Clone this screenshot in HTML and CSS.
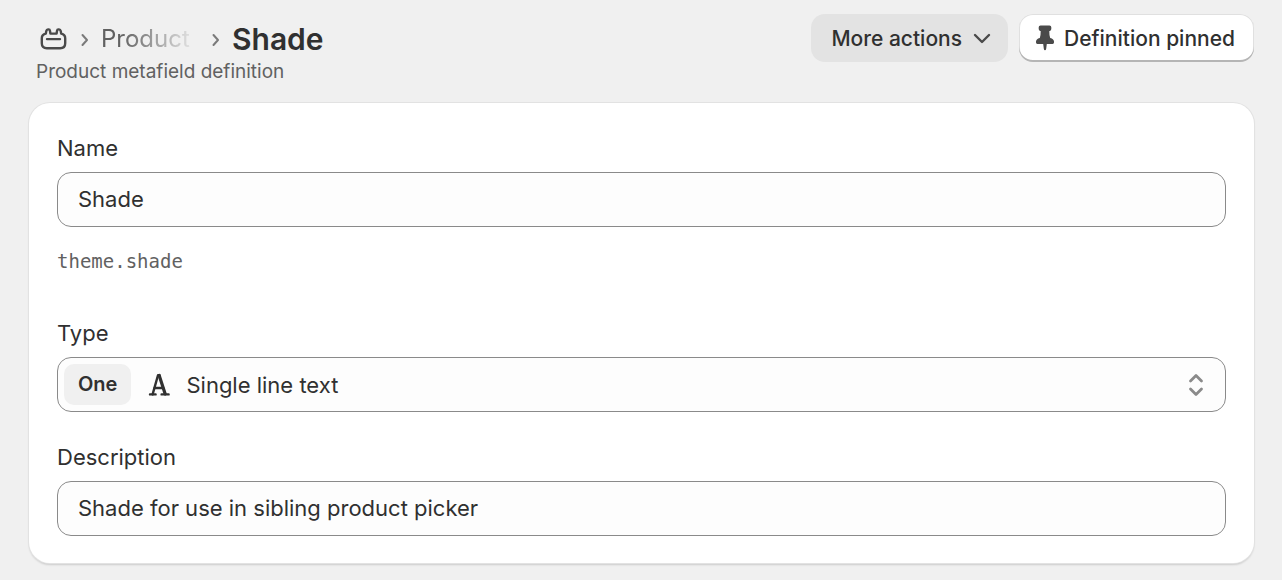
FILE: index.html
```html
<!DOCTYPE html>
<html lang="en">
<head>
  <meta charset="UTF-8">
  <meta name="viewport" content="width=device-width, initial-scale=1.0">
  <title>Shade</title>
  <link rel="stylesheet" href="styles.css">
</head>
<body>
  <main class="page">
    <header class="page-header">
      <div class="heading">
        <div class="title-row">
          <a class="home-link" href="#" aria-label="Custom data">
            <svg width="28" height="24" viewBox="0 0 28 24" fill="none" stroke="#4a4a4a" stroke-width="2.4" stroke-linecap="round" stroke-linejoin="round">
              <path d="M5.8 6.6 L6.3 4 Q6.6 2.4 8 2.4 H8.6 Q9.8 2.4 10 3.8 L10.4 6.6 H16.6 L17 3.8 Q17.2 2.4 18.4 2.4 H19 Q20.4 2.4 20.7 4 L21.2 6.6 Q25.2 7.4 25.2 11.2 V16.2 Q25.2 21.2 20.2 21.2 H6.8 Q1.8 21.2 1.8 16.2 V11.2 Q1.8 7.4 5.8 6.6 Z"/>
              <path d="M7 12.1 H20"/>
            </svg>
          </a>
          <svg class="chevron" width="8" height="14" viewBox="0 0 8 14" fill="none" stroke="#7a7a7a" stroke-width="2" stroke-linecap="round" stroke-linejoin="round">
            <path d="M1.5 2 L6 7 L1.5 12"/>
          </svg>
          <a class="parent-link" href="#">Product m</a>
          <svg class="chevron" width="8" height="14" viewBox="0 0 8 14" fill="none" stroke="#7a7a7a" stroke-width="2" stroke-linecap="round" stroke-linejoin="round">
            <path d="M1.5 2 L6 7 L1.5 12"/>
          </svg>
          <h1>Shade</h1>
        </div>
        <p class="subtitle">Product metafield definition</p>
      </div>
      <div class="actions">
        <button class="btn btn-plain" type="button">
          More actions
          <svg width="18" height="12" viewBox="0 0 18 12" fill="none" stroke="#4a4a4a" stroke-width="2.4" stroke-linecap="round" stroke-linejoin="round">
            <path d="M2 3 L9 10 L16 3"/>
          </svg>
        </button>
        <button class="btn btn-raised" type="button">
          <svg width="20" height="26" viewBox="0 0 20 26" fill="#4a4a4a">
            <path d="M5.5 0.5 H14.5 Q16.3 0.5 16.3 2.3 V4 Q16.3 5.6 14.8 6 L14.3 6.1 Q14.2 10.6 15.2 12.9 Q19 13.9 19 16.5 V17.6 Q19 19 17.6 19 H11.8 L11.2 23.8 Q10.9 25.3 10 25.3 Q9.1 25.3 8.8 23.8 L8.2 19 H2.4 Q1 19 1 17.6 V16.5 Q1 13.9 4.8 12.9 Q5.8 10.6 5.7 6.1 L5.2 6 Q3.7 5.6 3.7 4 V2.3 Q3.7 0.5 5.5 0.5 Z"/>
          </svg>
          Definition pinned
        </button>
      </div>
    </header>

    <form class="card">
      <div class="field">
        <label for="name">Name</label>
        <input class="control" id="name" type="text" value="Shade">
        <p class="handle">theme.shade</p>
      </div>

      <div class="field">
        <label for="type">Type</label>
        <div class="control type-control">
          <span class="tag">One</span>
          <svg class="type-icon" width="22" height="24" viewBox="0 0 22 24" fill="none" stroke="#303030" stroke-linecap="round" stroke-linejoin="round">
            <path stroke-width="2.4" d="M4.6 21.4 L10 2.2 H11.4"/>
            <path stroke-width="3.2" d="M11.2 2.4 L17.2 21"/>
            <path stroke-width="2.4" d="M6.6 15 H15.2 M2 21.4 H7.6 M13.6 21.4 H20.6"/>
          </svg>
          <select id="type">
            <option>Single line text</option>
          </select>
          <svg class="select-icon" width="16" height="24" viewBox="0 0 16 24" fill="none" stroke="#8a8a8a" stroke-width="2.8" stroke-linecap="round" stroke-linejoin="round">
            <path d="M2.5 8 L8 2.5 L13.5 8 M2.5 16 L8 21.5 L13.5 16"/>
          </svg>
        </div>
      </div>

      <div class="field">
        <label for="description">Description</label>
        <input class="control" id="description" type="text" value="Shade for use in sibling product picker">
      </div>
    </form>
  </main>
</body>
</html>
```
FILE: styles.css
```css
:root {
  --bg-color: #f0f0f0;
  --text-color: #303030;
  --text-subdued: #616161;
  --border-color: #8a8a8a;
  --field-bg: #fdfdfd;
}

* {
  box-sizing: border-box;
}

body {
  margin: 0;
  font-family: Inter, sans-serif;
  font-size: 22px;
  background-color: var(--bg-color);
  color: var(--text-color);
}

h1,
p {
  margin: 0;
}

.page {
  padding: 14px 28px 16px 29px;
}

.page-header {
  display: flex;
  justify-content: space-between;
  align-items: flex-start;
  margin-bottom: 19px;
}

.heading {
  padding-left: 7px;
}

.title-row {
  display: flex;
  align-items: center;
  height: 46px;
  padding-top: 3px;
}

.home-link {
  display: flex;
  margin-left: 4px;
}

.chevron {
  margin: 2px 12px 0 13px;
}

.parent-link {
  width: 98px;
  overflow: hidden;
  white-space: nowrap;
  font-size: 24px;
  color: var(--text-subdued);
  text-decoration: none;
  -webkit-mask-image: linear-gradient(90deg, #000 20%, transparent);
  mask-image: linear-gradient(90deg, #000 20%, transparent);
}

h1 {
  font-size: 30px;
  font-weight: 600;
}

.subtitle {
  font-size: 19px;
  line-height: 24px;
  color: var(--text-subdued);
}

.actions {
  display: flex;
  gap: 11px;
}

.btn {
  display: flex;
  align-items: center;
  height: 48px;
  border: none;
  border-radius: 14px;
  font-family: inherit;
  font-size: 21px;
  font-weight: 500;
  color: var(--text-color);
  cursor: pointer;
}

.btn-plain {
  gap: 11px;
  padding: 0 17px 0 20px;
  background-color: #e3e3e3;
}

.btn-raised {
  gap: 9px;
  padding: 0 19px 0 16px;
  background-color: white;
  box-shadow: inset 0 -2px 0 #b5b5b5, inset 0 0 0 1px #e0e0e0;
}

.card {
  display: flex;
  flex-direction: column;
  gap: 28px;
  padding: 28px 28px 27px;
  background-color: white;
  border-radius: 21px;
  box-shadow: 0 0 0 1px #e2e2e2, 0 2px 2px rgba(0, 0, 0, 0.15);
}

.field {
  display: flex;
  flex-direction: column;
}

.field label {
  margin-bottom: 7px;
  line-height: 34px;
}

.control {
  width: 100%;
  height: 55px;
  padding: 0 20px 2px;
  border: 1px solid var(--border-color);
  border-radius: 14px;
  background-color: var(--field-bg);
  font-family: inherit;
  font-size: 22px;
  color: var(--text-color);
}

.handle {
  margin: 20px 0 13px;
  font-family: "DejaVu Sans Mono", monospace;
  font-size: 19px;
  line-height: 28px;
  color: var(--text-subdued);
}

.type-control {
  display: flex;
  align-items: center;
  padding: 0 21px 0 6px;
}

.tag {
  padding: 0 14px;
  border-radius: 10px;
  background-color: #f0f0f0;
  font-size: 20px;
  font-weight: 600;
  line-height: 41px;
}

.type-icon {
  margin: 0 16px 0 17px;
}

.type-control select {
  flex: 1;
  height: 100%;
  padding: 0;
  border: none;
  outline: none;
  background: none;
  appearance: none;
  font-family: inherit;
  font-size: 22px;
  color: var(--text-color);
}
```
